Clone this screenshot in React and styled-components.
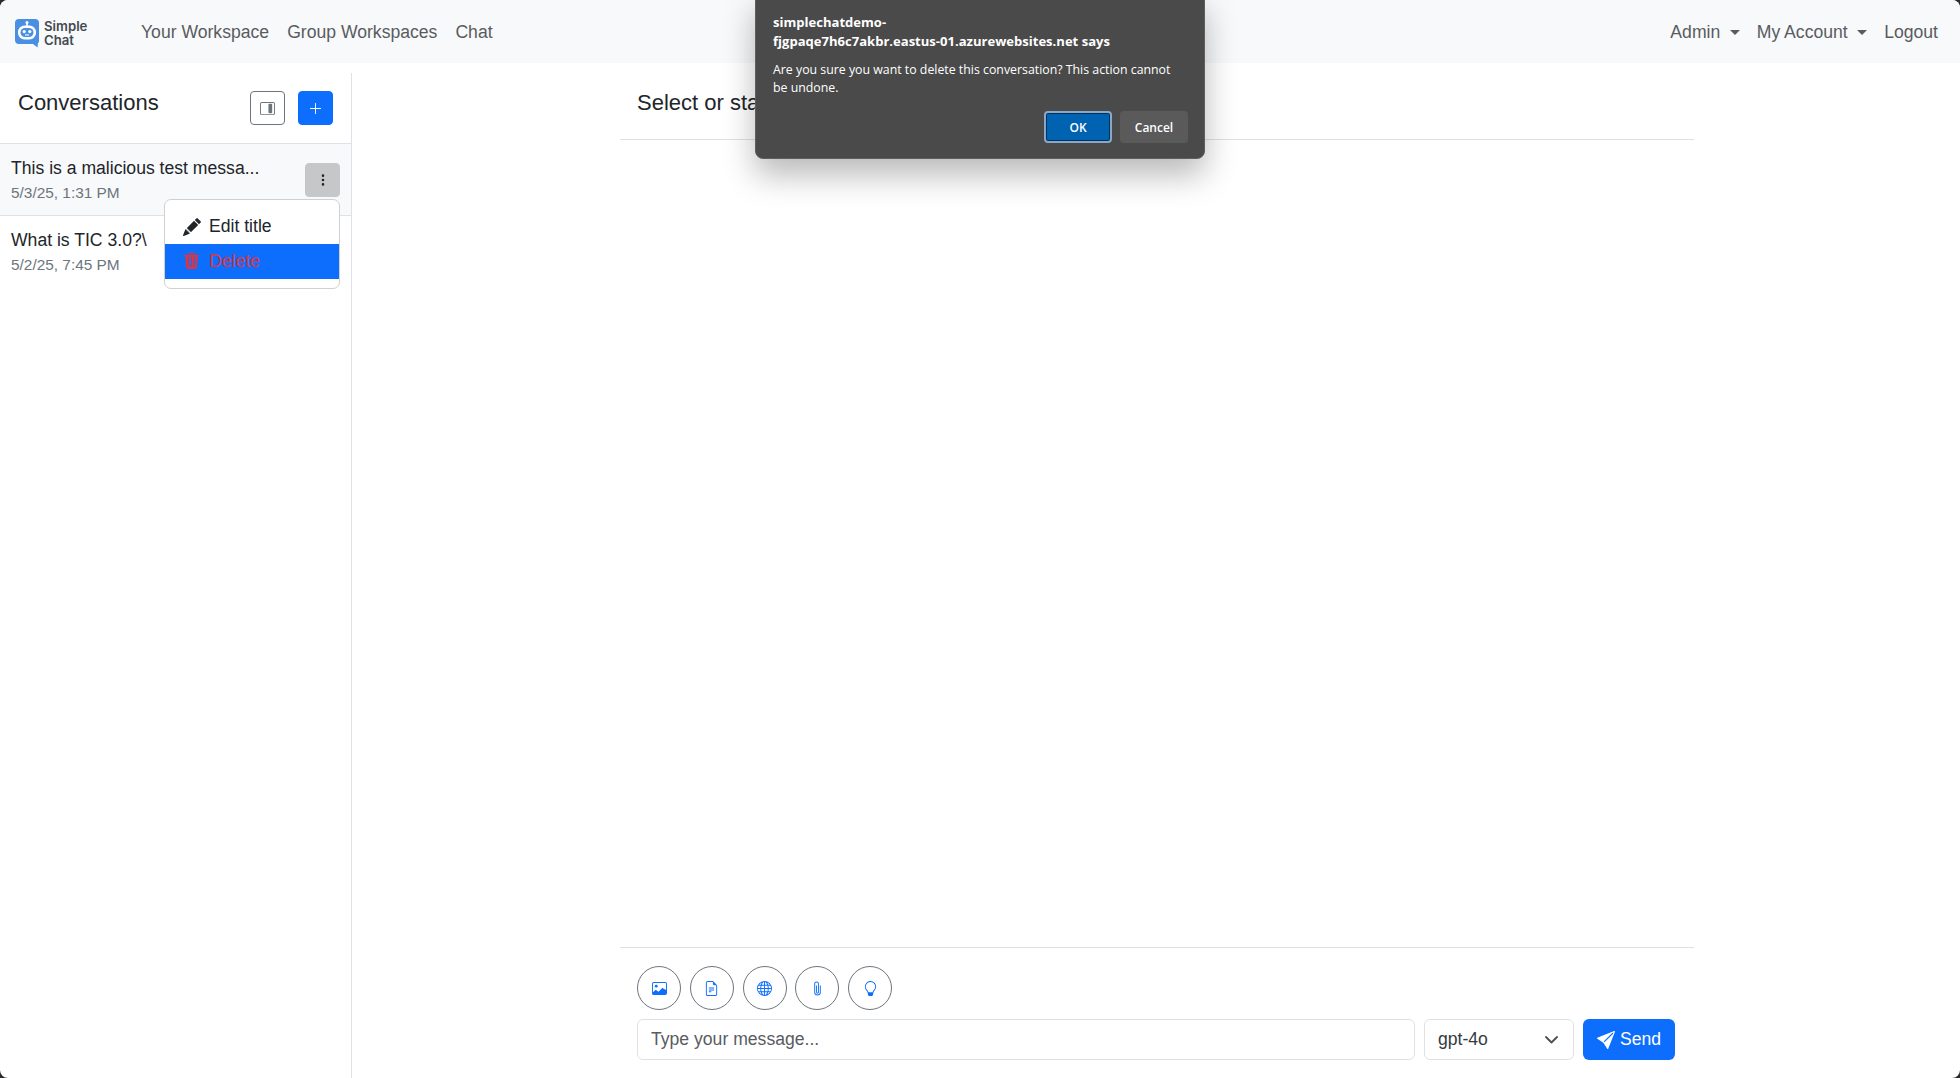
import styled, { createGlobalStyle } from "styled-components"
import {
  BsLayoutSidebarInsetReverse,
  BsPlusLg,
  BsThreeDotsVertical,
  BsPencilFill,
  BsTrash3Fill,
  BsImage,
  BsFileEarmarkText,
  BsGlobe,
  BsPaperclip,
  BsLightbulb,
  BsSendFill,
} from "react-icons/bs"

const GlobalStyle = createGlobalStyle`
  html, body {
    margin: 0;
    height: 100%;
    background: #2b2b2b;
    overflow: hidden;
  }
  * { box-sizing: border-box; }
`

const Page = styled.div`
  position: relative;
  width: 1960px;
  height: 1078px;
  display: flex;
  flex-direction: column;
  background: #fff;
  border-radius: 8px;
  overflow: hidden;
  font-family: "Liberation Sans", Arial, sans-serif;
  font-size: 17.6px;
  color: #212529;
`

const Navbar = styled.nav`
  height: 63px;
  flex: none;
  display: flex;
  align-items: center;
  padding: 2px 22px 0 15px;
  background: #f8f9fa;
`

const Brand = styled.div`
  display: flex;
  align-items: center;
  gap: 5px;
  width: 126px;
`

const BrandText = styled.div`
  font-family: "Inter", sans-serif;
  font-weight: 600;
  font-size: 13.2px;
  line-height: 14px;
  color: #444a52;
`

const NavLinks = styled.div`
  display: flex;
  gap: ${(p) => (p.$end ? "17px" : "18px")};
  flex: ${(p) => (p.$end ? "none" : "1")};
`

const NavLink = styled.span`
  color: #595c5f;
  white-space: nowrap;
`

const Caret = styled.span`
  display: inline-block;
  margin-left: 9.5px;
  vertical-align: 3px;
  border-top: 5px solid #595c5f;
  border-left: 5px solid transparent;
  border-right: 5px solid transparent;
`

const Body = styled.div`
  flex: 1;
  display: flex;
  padding-top: 10px;
  min-height: 0;
`

const Sidebar = styled.aside`
  width: 352px;
  flex: none;
  border-right: 1px solid #dee2e6;
`

const SidebarHeader = styled.div`
  height: 71px;
  display: flex;
  justify-content: space-between;
  padding: 8px 18px 0;
  border-bottom: 1px solid #dee2e6;
`

const SidebarTitle = styled.h5`
  margin: 0;
  font-size: 22px;
  font-weight: 400;
  line-height: 26px;
  padding-top: 9px;
`

const HeaderButtons = styled.div`
  display: flex;
  gap: 13px;
`

const SquareButton = styled.button`
  width: 35px;
  height: 34px;
  margin-top: 10px;
  padding: 0;
  display: flex;
  align-items: center;
  justify-content: center;
  border-radius: 4px;
  border: 1px solid ${(p) => (p.$primary ? "#0d6efd" : "#6c757d")};
  background: ${(p) => (p.$primary ? "#0d6efd" : "#fff")};
  color: ${(p) => (p.$primary ? "#fff" : "#6c757d")};
  font-size: 15px;
`

const Item = styled.div`
  position: relative;
  height: 72px;
  padding: 12px 11px 0;
  border-bottom: ${(p) => (p.$active ? "1px solid #dee2e6" : "0")};
  background: ${(p) => (p.$active ? "#f8f9fa" : "#fff")};
`

const ItemTitle = styled.div`
  line-height: 25px;
`

const ItemDate = styled.div`
  font-size: 15.4px;
  line-height: 24px;
  color: #6c757d;
`

const KebabButton = styled.button`
  position: absolute;
  top: 19px;
  right: 11px;
  width: 35px;
  height: 34px;
  padding: 0;
  display: flex;
  align-items: center;
  justify-content: center;
  border: 1px solid #c6c7c8;
  border-radius: 4px;
  background: #c6c7c8;
  color: #212529;
  font-size: 14px;
`

const Menu = styled.div`
  position: absolute;
  top: 199px;
  left: 164px;
  width: 176px;
  height: 90px;
  padding-top: 9px;
  background: #fff;
  border: 1px solid #cfd0d2;
  border-radius: 7px;
  z-index: 2;
`

const MenuItem = styled.div`
  height: 35px;
  display: flex;
  align-items: center;
  gap: 8px;
  padding-left: 18px;
  background: ${(p) => (p.$danger ? "#0d6efd" : "transparent")};
  color: ${(p) => (p.$danger ? "#dc3545" : "#212529")};
`

const TrashIcon = styled(BsTrash3Fill)`
  width: 17px;
  height: 17px;
  margin: -3px 1px 0 0;
`

const Main = styled.main`
  flex: 1;
  display: flex;
  justify-content: center;
  padding-left: 2px;
`

const ChatColumn = styled.section`
  width: 1074px;
  display: flex;
  flex-direction: column;
`

const ChatHeader = styled.div`
  height: 67px;
  padding: 17px 17px 0;
  border-bottom: 1px solid #dee2e6;
  font-size: 22px;
  line-height: 26px;
`

const ChatBody = styled.div`
  flex: 1;
`

const Composer = styled.div`
  height: 131px;
  padding: 18px 19px 0 17px;
  border-top: 1px solid #dee2e6;
`

const ToolRow = styled.div`
  display: flex;
  gap: 8.75px;
  margin-bottom: 9px;
`

const RoundButton = styled.button`
  width: 44px;
  height: 44px;
  padding: 0;
  display: flex;
  align-items: center;
  justify-content: center;
  border: 1px solid #6c757d;
  border-radius: 50%;
  background: #fff;
  color: #0d6efd;
  font-size: 15px;
`

const InputRow = styled.div`
  display: flex;
  gap: 9px;
`

const MessageInput = styled.div`
  flex: 1;
  height: 41px;
  padding: 0 13px;
  display: flex;
  align-items: center;
  border: 1px solid #dee2e6;
  border-radius: 6px;
  color: #595c5f;
`

const ModelSelect = styled.div`
  width: 150px;
  height: 41px;
  padding: 0 15px 0 13px;
  display: flex;
  align-items: center;
  justify-content: space-between;
  border: 1px solid #dee2e6;
  border-radius: 6px;
  color: #343a40;
`

const SendButton = styled.button`
  width: 92px;
  height: 41px;
  padding: 0;
  display: flex;
  align-items: center;
  justify-content: center;
  gap: 5px;
  border: 0;
  border-radius: 6px;
  background: #0d6efd;
  color: #fff;
  font-family: inherit;
  font-size: 17.6px;
`

const Dialog = styled.div`
  position: absolute;
  top: -8px;
  left: 755px;
  width: 450px;
  height: 167px;
  padding: 20px 16px 0 17px;
  background: #4a4a4a;
  border: 1px solid #5f5f5f;
  border-radius: 8px;
  box-shadow: 0 16px 32px rgba(0, 0, 0, 0.28);
  font-family: "Open Sans", sans-serif;
  color: #fff;
  z-index: 5;
`

const DialogTitle = styled.div`
  font-size: 13.05px;
  font-weight: 700;
  line-height: 19px;
`

const DialogText = styled.div`
  margin-top: 10px;
  font-size: 12.33px;
  line-height: 18px;
`

const DialogActions = styled.div`
  display: flex;
  justify-content: flex-end;
  gap: 8px;
  margin-top: 14px;
`

const DialogButton = styled.button`
  width: 68px;
  height: 32px;
  padding: 0;
  border-radius: 4px;
  border: ${(p) => (p.$ok ? "2px solid #89a8c7" : "0")};
  background: ${(p) => (p.$ok ? "#0063b1" : "#5a5a5a")};
  box-shadow: ${(p) => (p.$ok ? "inset 0 0 0 1px #00315a" : "none")};
  color: #fff;
  font-family: inherit;
  font-size: 12px;
  font-weight: 600;
`

const Logo = () => (
  <svg width="24" height="30" viewBox="0 0 24 30">
    <path d="M4 1h16a4 4 0 0 1 4 4v19a4 4 0 0 1-1 1l-0.5 4.5-4.5-3.5H4a4 4 0 0 1-4-4V5a4 4 0 0 1 4-4z" fill="#4a90e2" />
    <rect x="11.2" y="4" width="1.6" height="4" fill="#fff" />
    <circle cx="12" cy="4.4" r="1.5" fill="#fff" />
    <rect x="3" y="7.5" width="18" height="14" rx="6.5" fill="#fff" />
    <rect x="5.5" y="10" width="13" height="9" rx="4.5" fill="#4a90e2" />
    <circle cx="9.2" cy="13.6" r="1.6" fill="#fff" />
    <circle cx="14.8" cy="13.6" r="1.6" fill="#fff" />
    <rect x="10" y="16.4" width="4" height="1.1" fill="#fff" />
  </svg>
)

const Chevron = () => (
  <svg width="13" height="8" viewBox="0 0 13 8">
    <path d="M1 1l5.5 5.5L12 1" fill="none" stroke="#495057" strokeWidth="1.8" strokeLinecap="round" strokeLinejoin="round" />
  </svg>
)

const tools = [BsImage, BsFileEarmarkText, BsGlobe, BsPaperclip, BsLightbulb]

export default function App() {
  return (
    <>
      <GlobalStyle />
      <Page>
        <Navbar>
          <Brand>
            <Logo />
            <BrandText>
              Simple
              <br />
              Chat
            </BrandText>
          </Brand>
          <NavLinks>
            <NavLink>Your Workspace</NavLink>
            <NavLink>Group Workspaces</NavLink>
            <NavLink>Chat</NavLink>
          </NavLinks>
          <NavLinks $end>
            <NavLink>
              Admin<Caret />
            </NavLink>
            <NavLink>
              My Account<Caret />
            </NavLink>
            <NavLink>Logout</NavLink>
          </NavLinks>
        </Navbar>
        <Body>
          <Sidebar>
            <SidebarHeader>
              <SidebarTitle>Conversations</SidebarTitle>
              <HeaderButtons>
                <SquareButton>
                  <BsLayoutSidebarInsetReverse />
                </SquareButton>
                <SquareButton $primary>
                  <BsPlusLg />
                </SquareButton>
              </HeaderButtons>
            </SidebarHeader>
            <Item $active>
              <ItemTitle>This is a malicious test messa...</ItemTitle>
              <ItemDate>5/3/25, 1:31 PM</ItemDate>
              <KebabButton>
                <BsThreeDotsVertical />
              </KebabButton>
            </Item>
            <Item>
              <ItemTitle>What is TIC 3.0?\</ItemTitle>
              <ItemDate>5/2/25, 7:45 PM</ItemDate>
            </Item>
          </Sidebar>
          <Main>
            <ChatColumn>
              <ChatHeader>Select or start a new conversation</ChatHeader>
              <ChatBody />
              <Composer>
                <ToolRow>
                  {tools.map((Icon, i) => (
                    <RoundButton key={i}>
                      <Icon />
                    </RoundButton>
                  ))}
                </ToolRow>
                <InputRow>
                  <MessageInput>Type your message...</MessageInput>
                  <ModelSelect>
                    gpt-4o
                    <Chevron />
                  </ModelSelect>
                  <SendButton>
                    <BsSendFill size={18} />
                    Send
                  </SendButton>
                </InputRow>
              </Composer>
            </ChatColumn>
          </Main>
        </Body>
        <Menu>
          <MenuItem>
            <BsPencilFill size={18} />
            Edit title
          </MenuItem>
          <MenuItem $danger>
            <TrashIcon />
            Delete
          </MenuItem>
        </Menu>
        <Dialog>
          <DialogTitle>
            simplechatdemo-
            <br />
            fjgpaqe7h6c7akbr.eastus-01.azurewebsites.net says
          </DialogTitle>
          <DialogText>Are you sure you want to delete this conversation? This action cannot be undone.</DialogText>
          <DialogActions>
            <DialogButton $ok>OK</DialogButton>
            <DialogButton>Cancel</DialogButton>
          </DialogActions>
        </Dialog>
      </Page>
    </>
  )
}
